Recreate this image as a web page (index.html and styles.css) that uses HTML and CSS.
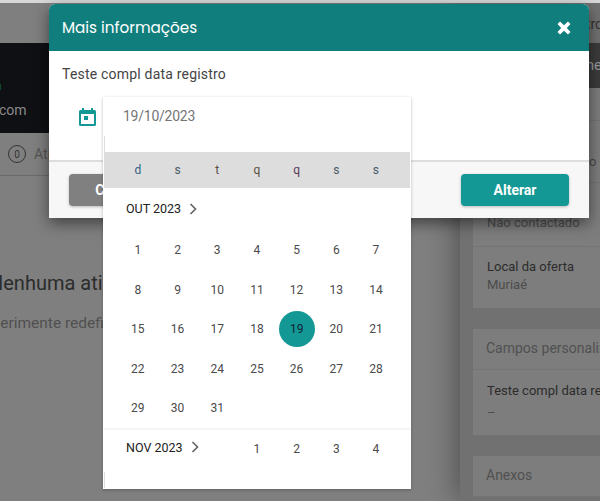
FILE: index.html
```html
<!DOCTYPE html>
<html>
<head>
    <title>Mais informações</title>
    <link rel="stylesheet" href="styles.css">
</head>
<body>
    <div class="page">
        <div class="columns">
            <div class="main">
                <div class="topbar"></div>
                <div class="hero">
                    <div class="hero-mark"></div>
                    <div class="hero-mail">com</div>
                </div>
                <div class="tabs">
                    <span class="tab-count">0</span>
                    <span class="tab-label">Atividades</span>
                </div>
                <div class="empty">
                    <h2>Nenhuma atividade</h2>
                    <p>Experimente redefinir os filtros</p>
                </div>
            </div>
            <div class="side">
                <div class="topbar topbar-side"><span class="topbar-text">tro</span></div>
                <div class="side-head"><span class="side-head-text">me</span></div>
                <div class="side-body">
                    <div class="card">
                        <div class="row row-a"></div>
                        <div class="row row-b"><span class="row-tail">o u</span></div>
                        <div class="row row-c"><div class="row-value">Não contactado</div></div>
                        <div class="row row-d">
                            <div class="row-label">Local da oferta</div>
                            <div class="row-value">Muriaé</div>
                        </div>
                    </div>
                    <div class="card">
                        <div class="card-title">Campos personalizados</div>
                        <div class="row row-e">
                            <div class="row-label">Teste compl data registro</div>
                            <div class="row-value row-dash">–</div>
                        </div>
                    </div>
                    <div class="card">
                        <div class="card-title">Anexos</div>
                    </div>
                </div>
            </div>
        </div>
    </div>

    <div class="modal">
        <div class="modal-header">
            <span class="modal-title">Mais informações</span>
            <svg class="modal-close" width="14" height="14" viewBox="0 0 14 14">
                <path d="M3 0.5 7 4.2 11 0.5 13.5 3 9.8 7 13.5 11 11 13.5 7 9.8 3 13.5 0.5 11 4.2 7 0.5 3Z" fill="#fff"/>
            </svg>
        </div>
        <div class="modal-body">
            <div class="field-label">Teste compl data registro</div>
            <svg class="field-icon" width="17" height="18" viewBox="0 0 17 18">
                <path d="M3 0h2v2h7V0h2v2h1.5A1.5 1.5 0 0 1 17 3.5v13a1.5 1.5 0 0 1-1.5 1.5h-14A1.5 1.5 0 0 1 0 16.5v-13A1.5 1.5 0 0 1 1.5 2H3V0ZM2 6v10h13V6H2Z" fill="#149896"/>
                <rect x="5" y="8" width="4" height="4" fill="#149896"/>
            </svg>
        </div>
        <div class="modal-footer">
            <button class="btn btn-cancel">Cancelar</button>
            <button class="btn btn-save">Alterar</button>
        </div>
    </div>

    <div class="picker">
        <div class="picker-input">19/10/2023</div>
        <div class="picker-tick"></div>
        <div class="weekdays">
            <span class="wd-a">d</span><span class="wd-b">s</span><span class="wd-c">t</span><span class="wd-c">q</span><span class="wd-d">q</span><span class="wd-b">s</span><span class="wd-b">s</span>
        </div>
        <div class="month-head">OUT 2023 <svg class="chev" width="8" height="12" viewBox="0 0 8 12"><path d="M1.5 1 6.5 6 1.5 11" fill="none" stroke="#666" stroke-width="1.7"/></svg></div>
        <div class="days">
            <span>1</span><span>2</span><span>3</span><span>4</span><span>5</span><span>6</span><span>7</span>
            <span>8</span><span>9</span><span>10</span><span>11</span><span>12</span><span>13</span><span>14</span>
            <span>15</span><span>16</span><span>17</span><span>18</span><span class="day-on">19</span><span>20</span><span>21</span>
            <span>22</span><span>23</span><span>24</span><span>25</span><span>26</span><span>27</span><span>28</span>
            <span>29</span><span>30</span><span>31</span>
        </div>
        <div class="next-month">
            <div class="next-title">NOV 2023 <svg class="chev" width="8" height="12" viewBox="0 0 8 12"><path d="M1.5 1 6.5 6 1.5 11" fill="none" stroke="#666" stroke-width="1.7"/></svg></div>
            <div class="days days-next">
                <span class="gap"></span><span class="gap"></span><span class="gap"></span>
                <span>1</span><span>2</span><span>3</span><span>4</span>
            </div>
        </div>
        <div class="picker-tick picker-tick-end"></div>
    </div>
</body>
</html>
```

FILE: styles.css
```css
* {
    box-sizing: border-box;
}

body {
    margin: 0;
    height: 501px;
    overflow: hidden;
    background-color: #7f7f7f;
    font-family: Roboto, sans-serif;
    color: #333;
}

.page {
    height: 501px;
    overflow: hidden;
    border-top: 3px solid #d8d8d8;
}

.columns {
    display: flex;
    height: 498px;
}

.topbar {
    height: 40px;
    background-color: #7f7f7f;
}

.topbar-side {
    display: flex;
    justify-content: flex-end;
    align-items: center;
    padding-top: 2px;
    background-color: #717171;
    font-size: 14px;
}

.topbar-text {
    color: #333;
    margin-right: -3px;
}

.main {
    width: 460px;
    flex: none;
    overflow: hidden;
}

.hero {
    position: relative;
    height: 90px;
    background-color: #0f1013;
    color: #8a8a8a;
    font-size: 14px;
    padding-top: 59px;
}

.hero-mark {
    position: absolute;
    left: 0;
    top: 41px;
    width: 1px;
    height: 6px;
    background-color: #0f4a28;
}

.hero-mail {
    margin-left: -1px;
}

.tabs {
    height: 43px;
    border-bottom: 1px solid #6a6a6a;
    display: flex;
    align-items: center;
    padding-left: 8px;
    font-size: 14px;
    color: #555;
}

.tab-count {
    width: 18px;
    height: 18px;
    border: 1px solid #333;
    border-radius: 50%;
    font-size: 10px;
    color: #333;
    display: flex;
    align-items: center;
    justify-content: center;
    margin-right: 8px;
}

.empty {
    padding-top: 95px;
}

.empty h2 {
    margin: 0 0 0 -11px;
    font-size: 20px;
    font-weight: 400;
    color: #2c2c2c;
    white-space: nowrap;
}

.empty p {
    margin: 19px 0 0 -25px;
    font-size: 15.5px;
    color: #505050;
    white-space: nowrap;
}

.side {
    flex: 1;
    min-width: 0;
    background-color: #717171;
    box-shadow: 0 0 30px rgba(0, 0, 0, 0.45);
}

.side-head {
    height: 45px;
    padding-top: 13px;
    display: flex;
    justify-content: flex-end;
    background-color: #3b3b3b;
    color: #9a9a9a;
    font-size: 15px;
}

.side-head-text {
    margin-right: -2px;
}

.side-body {
    height: 410px;
    overflow: hidden;
    padding-left: 13px;
}

.card {
    background-color: #7d7d7d;
    margin-bottom: 21px;
}

.card-title {
    height: 41px;
    padding: 0 13px;
    line-height: 39px;
    font-size: 14px;
    color: #505050;
    border-bottom: 1px solid #747474;
    white-space: nowrap;
}

.row {
    padding: 0 14px;
    border-bottom: 1px solid #747474;
    font-size: 13px;
    line-height: 16px;
    white-space: nowrap;
}

.row-a {
    height: 33px;
}

.row-b {
    height: 62px;
    padding-top: 33px;
    color: #484848;
}

.row-tail {
    margin-left: 102px;
}

.row-c {
    height: 64px;
    padding-top: 32px;
}

.row-d {
    height: 61px;
    padding-top: 12px;
    border-bottom: none;
}

.row-e {
    height: 65px;
    padding-top: 13px;
    border-bottom: none;
}

.row-label {
    color: #2c2c2c;
}

.row-value {
    color: #4c4c4c;
    margin-top: 2px;
}

.row-c .row-value {
    margin-top: 0;
}

.row-dash {
    margin-top: 6px;
}

/* modal */
.modal {
    position: absolute;
    left: 49px;
    top: 4px;
    width: 540px;
    height: 214px;
    display: flex;
    flex-direction: column;
    background-color: #fff;
    border-radius: 6px 6px 0 0;
    box-shadow: 0 5px 15px rgba(0, 0, 0, 0.5);
}

.modal-header {
    height: 47px;
    flex: none;
    display: flex;
    align-items: center;
    justify-content: space-between;
    padding: 0 18px 0 13px;
    background-color: #107e7c;
    border-radius: 6px 6px 0 0;
}

.modal-title {
    color: #fff;
    font-family: Poppins, "Open Sans", sans-serif;
    font-size: 15.2px;
}

.modal-body {
    flex: 1;
    padding: 15px 13px 0;
}

.field-label {
    font-size: 14px;
    line-height: 16px;
    letter-spacing: 0.2px;
    color: #444;
}

.field-icon {
    display: block;
    margin: 26px 0 0 17px;
}

.modal-footer {
    height: 58px;
    flex: none;
    display: flex;
    justify-content: space-between;
    align-items: center;
    padding: 0 20px;
    background-color: #f7f7f7;
    border-top: 2px solid #ddd;
}

.btn {
    width: 108px;
    height: 32px;
    border: none;
    border-radius: 4px;
    color: #fff;
    font-family: Roboto, sans-serif;
    font-size: 14px;
    font-weight: 700;
    box-shadow: 0 1px 3px rgba(0, 0, 0, 0.25);
}

.btn-cancel {
    background-color: #808080;
}

.btn-save {
    background-color: #149896;
}

/* date picker */
.picker {
    position: absolute;
    left: 103px;
    top: 97px;
    width: 308px;
    height: 392px;
    background-color: #fff;
    box-shadow: 0 1px 3px rgba(0, 0, 0, 0.25);
}

.picker-input {
    height: 39px;
    padding-top: 11px;
    padding-left: 20px;
    font-size: 14px;
    letter-spacing: -0.25px;
    color: #757575;
}

.picker-tick {
    width: 1px;
    height: 16px;
    margin-left: 1px;
    background-color: #ddd;
}

.picker-tick-end {
    position: absolute;
    left: 0;
    bottom: 1px;
}

.weekdays {
    display: grid;
    grid-template-columns: repeat(7, 39.7px);
    height: 36px;
    margin: 0 1px;
    padding-left: 14px;
    align-items: center;
    background-color: #ddd;
    font-size: 12px;
    text-align: center;
}

.wd-a {
    color: #3a5f85;
}

.wd-b {
    color: #4a5a68;
}

.wd-c {
    color: #5a5040;
}

.wd-d {
    color: #5a3a5a;
}

.month-head {
    display: flex;
    align-items: center;
    gap: 8px;
    height: 43px;
    padding: 0 0 2px 23px;
    font-size: 12.5px;
    color: #222;
}

.chev {
    display: block;
}

.days {
    display: grid;
    grid-template-columns: repeat(7, 39.7px);
    grid-auto-rows: 39.5px;
    padding-left: 15px;
    font-size: 12px;
    color: #4a4a4a;
    text-align: center;
    line-height: 39.5px;
}

.day-on {
    width: 36px;
    height: 36px;
    margin: 1px 0 0 2px;
    border-radius: 50%;
    background-color: #149896;
    color: #123;
    line-height: 36px;
}

.next-month {
    position: relative;
    height: 40px;
    border-top: 2px solid #f5f5f5;
    margin: -1px 1px 0;
}

.next-title {
    position: absolute;
    left: 22px;
    top: 4px;
    display: flex;
    align-items: center;
    gap: 8px;
    font-size: 12.5px;
    color: #222;
    line-height: 27px;
}

.days-next {
    padding-left: 14px;
}
```
